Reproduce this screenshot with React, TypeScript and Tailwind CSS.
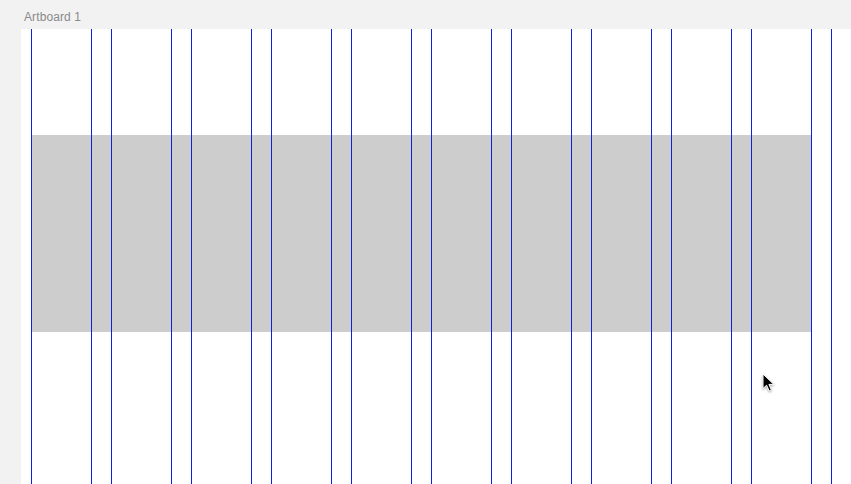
// Artboard with a 12-column layout grid and a highlighted band.

const columns = Array.from({ length: 12 }, (_, i) => i);

function Cursor() {
  return (
    <svg
      width="14"
      height="20"
      viewBox="0 0 14 20"
      className="absolute left-[762px] top-[373px] drop-shadow-[0_1px_1px_rgba(0,0,0,0.35)]"
    >
      <path
        d="M1 1 L1 15.5 L4.6 12.2 L7.2 18 L9.4 17 L6.9 11.4 L11.8 11.4 Z"
        fill="#000"
        stroke="#fff"
        strokeWidth="1"
        strokeLinejoin="round"
      />
    </svg>
  );
}

export default function App() {
  return (
    <div className="relative h-[484px] w-[851px] overflow-hidden bg-[#f2f2f2] font-['Liberation_Sans',Arial,sans-serif]">
      <div className="h-[29px] pl-[24px] pt-[11px] text-[12px] leading-[13px] tracking-[0.1px] text-[#8a8a8a]">
        Artboard 1
      </div>
      <div className="ml-[21px] grid h-[455px] bg-white pl-[10px]">
        {/* highlighted band spanning ten columns */}
        <div className="[grid-area:1/1] pt-[106px]">
          <div className="h-[197px] w-[780px] bg-[#cdcdcd]" />
        </div>
        {/* column guides sit on top of the band */}
        <div className="[grid-area:1/1] flex gap-[19px]">
          {columns.map((c) => (
            <div
              key={c}
              className="h-full w-[61px] shrink-0 border-x border-[#0b22e0]"
            />
          ))}
        </div>
      </div>
      <Cursor />
    </div>
  );
}
